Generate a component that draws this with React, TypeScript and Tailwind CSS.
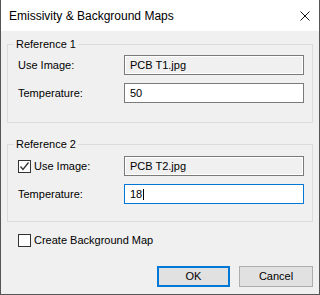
import React from "react";

function Check({ checked }: { checked?: boolean }) {
  return (
    <span className="w-[13px] h-[13px] border border-[#333333] bg-white flex items-center justify-center shrink-0">
      {checked && (
        <svg width="11" height="11" viewBox="0 0 11 11">
          <polyline points="1.5,5.5 4,8.5 9.5,1.5" fill="none" stroke="#333333" strokeWidth="1.3" />
        </svg>
      )}
    </span>
  );
}

export default function App() {
  return (
    <div className="w-[320px] h-[295px] bg-[#f0f0f0] border-x border-b border-[#555555] font-['Liberation_Sans',Arial,sans-serif] text-black flex flex-col">
      <div className="h-[31px] bg-white flex items-center justify-between pl-[8px] pr-[9px] shrink-0">
        <span className="text-[12px]">Emissivity &amp; Background Maps</span>
        <svg width="10" height="10" viewBox="0 0 10 10">
          <path d="M0.5 0.5 L9.5 9.5 M9.5 0.5 L0.5 9.5" stroke="#111" strokeWidth="1" />
        </svg>
      </div>
      <div className="px-[6px] text-[11px] flex flex-col">
        <fieldset className="mt-[5px] border border-[#dcdcdc]">
          <legend className="ml-[6px] px-[2px] leading-[16px]">Reference 1</legend>
          <div className="grid grid-cols-[106px_180px] gap-y-[8px] items-center pt-[3px] pb-[19px] pl-[10px]">
            <span>Use Image:</span>
            <div className="h-[20px] border border-[#7a7a7a] bg-[#f0f0f0] shadow-[inset_0_0_0_1px_#ffffff] flex items-center pl-[5px]">PCB T1.jpg</div>
            <span>Temperature:</span>
            <div className="h-[20px] border border-[#7a7a7a] bg-white flex items-center pl-[5px]">50</div>
          </div>
        </fieldset>
        <fieldset className="mt-[13px] border border-[#dcdcdc]">
          <legend className="ml-[6px] px-[2px] leading-[16px]">Reference 2</legend>
          <div className="grid grid-cols-[106px_180px] gap-y-[8px] items-center pt-[4px] pb-[17px] pl-[10px]">
            <span className="flex items-center gap-[3px]">
              <Check checked />
              <span>Use Image:</span>
            </span>
            <div className="h-[20px] border border-[#7a7a7a] bg-[#f0f0f0] shadow-[inset_0_0_0_1px_#ffffff] flex items-center pl-[5px]">PCB T2.jpg</div>
            <span>Temperature:</span>
            <div className="h-[20px] border border-[#0078d7] bg-white flex items-center pl-[5px]">
              <span>18</span>
              <span className="w-px h-[11px] bg-black ml-[1px]" />
            </div>
          </div>
        </fieldset>
        <div className="mt-[12px] pl-[11px] h-[13px] flex items-center gap-[3px]">
          <Check />
          <span>Create Background Map</span>
        </div>
        <div className="mt-[19px] flex justify-end gap-[9px]">
          <button className="w-[73px] h-[21px] border-2 border-[#0078d7] bg-[#e1e1e1] flex items-center justify-center">OK</button>
          <button className="w-[74px] h-[21px] border border-[#adadad] bg-[#e1e1e1] flex items-center justify-center">Cancel</button>
        </div>
      </div>
    </div>
  );
}
